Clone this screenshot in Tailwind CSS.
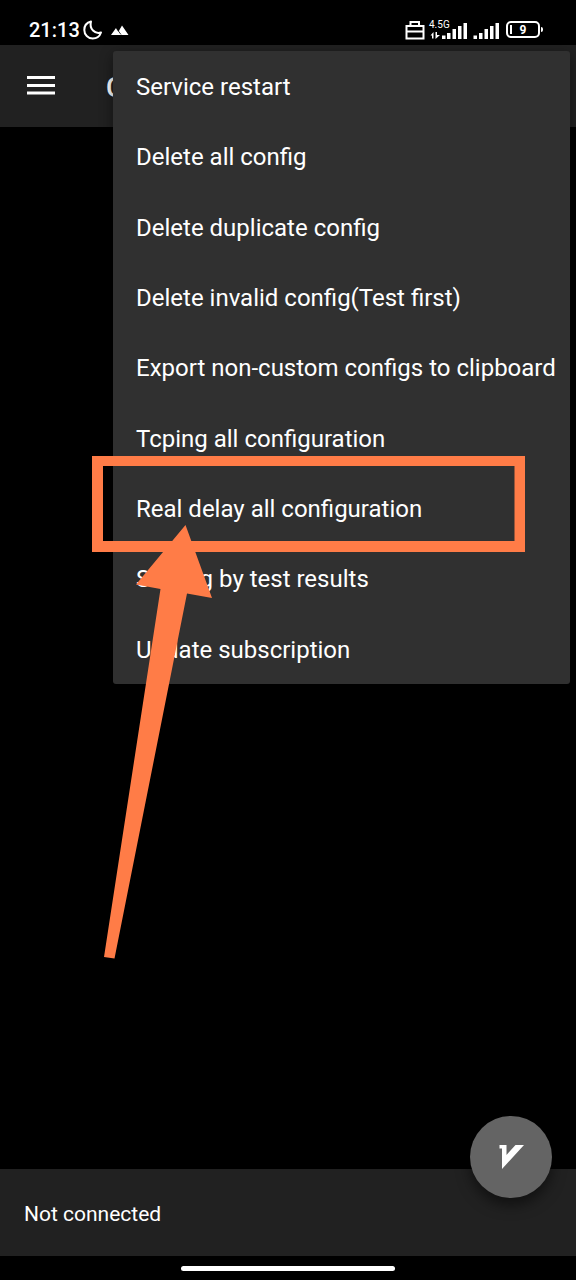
<!DOCTYPE html>
<html lang="en">
<head>
<meta charset="utf-8">
<meta name="viewport" content="width=device-width, initial-scale=1">
<title>Configurations</title>
<script src="https://cdn.jsdelivr.net/npm/@tailwindcss/browser@4"></script>
</head>
<body class="relative flex min-h-screen flex-col overflow-x-hidden bg-black font-['Roboto',sans-serif] text-white">

  <!-- System status bar -->
  <div class="flex h-[45px] shrink-0 items-center justify-between pt-[14px] pr-[33px] pl-[29px]">
    <div class="flex items-center">
      <span class="text-[20px] leading-6 font-medium">21:13</span>
      <svg class="ml-[3px] h-5 w-5" viewBox="0 0 20 20" fill="none" stroke="currentColor" stroke-width="2" stroke-linejoin="round" aria-hidden="true"><path d="M8 1.500C4 2.500 1.300 5.800 1.300 10C1.300 14.700 5 18.500 9.700 18.500C13.500 18.500 16.800 16 18 12.500C12 14.500 6 9 8 1.500Z"/></svg>
      <svg class="ml-2 h-[10px] w-[18px]" viewBox="0 0 18 10" fill="currentColor" aria-hidden="true"><path d="M0 10L5 3L7.500 6.500L11 0.500L17.500 10Z"/><path d="M5.500 3.500L10 9.500" stroke="#000" stroke-width="0.800"/></svg>
    </div>
    <div class="flex items-center">
      <svg class="h-5 w-5" viewBox="0 0 20 20" fill="none" stroke="currentColor" stroke-width="2" aria-hidden="true"><path d="M1.500 6H18.500V18.500H1.500ZM5.500 6V2H14V6M1.500 11.500H18.500"/></svg>
      <div class="relative ml-1 h-5 w-[39px]">
        <svg class="h-5 w-[39px]" viewBox="0 0 39 20" fill="currentColor" aria-hidden="true"><path d="M13 15.500h3.500V19h-3.500zM18 13h3.500v6h-3.500zM23.500 9h3.500v10h-3.500zM29 6h3.500v13h-3.500zM34.500 3h3.500v16h-3.500z"/><path d="M1.500 15.500L4.500 12V18.500H3V15.500ZM6.500 12H8V15H11L6.500 19Z"/></svg>
        <span class="absolute top-0 left-0 text-[10px] leading-[10px]">4.5G</span>
      </div>
      <svg class="ml-[5px] h-5 w-[27px]" viewBox="0 0 27 20" fill="currentColor" aria-hidden="true"><path d="M0.500 15.500h3.500V19h-3.500zM6 13h3.500v6h-3.500zM11.500 9h3.500v10h-3.500zM17 6h3.500v13h-3.500zM22.500 3h3.500v16h-3.500z"/></svg>
      <div class="ml-[6px] flex items-center">
        <div class="relative flex h-[17px] w-[34px] items-center justify-center rounded-[5px] border-2 border-white text-[12px] leading-3 font-bold">
          <span class="absolute left-[2px] h-[9px] w-[2px] bg-white"></span>9
        </div>
        <span class="ml-px h-[5px] w-[2px] rounded-r bg-white"></span>
      </div>
    </div>
  </div>

  <!-- App bar -->
  <header class="flex h-[82px] shrink-0 items-center bg-[#212121] pl-[27px]">
    <button type="button" aria-label="Open navigation" class="flex h-10 w-7 items-center">
      <svg class="h-5 w-7" viewBox="0 0 28 20" fill="currentColor" aria-hidden="true"><path d="M0 0h28v3H0zM0 8h28v3H0zM0 15.500h28v3H0z"/></svg>
    </button>
    <h1 class="ml-[51px] pt-1 text-[28px] leading-8 font-medium">C</h1>
  </header>

  <main class="flex-1"></main>

  <!-- Connection status -->
  <footer class="relative flex h-[87px] shrink-0 items-center bg-[#212121] px-6">
    <p class="pt-[2px] text-[21px] leading-6">Not connected</p>
    <button type="button" aria-label="Connect" class="absolute -top-[53px] right-6 flex h-[82px] w-[82px] items-center justify-center rounded-full bg-[#646464] shadow-[0_7px_14px_rgba(0,0,0,0.5)]">
      <svg class="h-6 w-[25px]" viewBox="0 0 25 24" fill="currentColor" aria-hidden="true"><path d="M0.500 0H7.500V10L16.500 0H25L3 24V3.500H0.500Z"/></svg>
    </button>
  </footer>

  <!-- Gesture bar -->
  <div class="flex h-6 shrink-0 items-center justify-center">
    <span class="h-[5px] w-[37%] rounded-full bg-white"></span>
  </div>

  <!-- Overflow menu -->
  <div role="menu" class="absolute top-[51px] right-[6px] left-[113px] grid min-h-[633px] grid-rows-9 rounded-[3px] bg-[#303030] text-[24px] leading-7 whitespace-nowrap shadow-[0_4px_14px_rgba(0,0,0,0.45)]">
    <button type="button" role="menuitem" class="px-[23px] pt-[2px] text-left">Service restart</button>
    <button type="button" role="menuitem" class="px-[23px] pt-[2px] text-left">Delete all config</button>
    <button type="button" role="menuitem" class="px-[23px] pt-[2px] text-left">Delete duplicate config</button>
    <button type="button" role="menuitem" class="px-[23px] pt-[2px] text-left">Delete invalid config(Test first)</button>
    <button type="button" role="menuitem" class="px-[23px] pt-[2px] text-left">Export non-custom configs to clipboard</button>
    <button type="button" role="menuitem" class="px-[23px] pt-[2px] text-left">Tcping all configuration</button>
    <button type="button" role="menuitem" class="px-[23px] pt-[2px] text-left">Real delay all configuration</button>
    <button type="button" role="menuitem" class="px-[23px] pt-[2px] text-left">Sorting by test results</button>
    <button type="button" role="menuitem" class="px-[23px] pt-[2px] text-left">Update subscription</button>
  </div>

  <!-- Highlight frame and arrow -->
  <svg class="pointer-events-none absolute top-[456px] left-[92px] h-[503px] w-[433px]" viewBox="0 0 433 503" fill="#ff7c47" aria-hidden="true">
    <path fill-rule="evenodd" d="M0 0H433V96H0ZM11 10V85H422.500V10Z"/>
    <path d="M93.500 69L120 142L95 137.500L22.500 502.500L12 501L68.500 133L44 128.500Z"/>
  </svg>
</body>
</html>
